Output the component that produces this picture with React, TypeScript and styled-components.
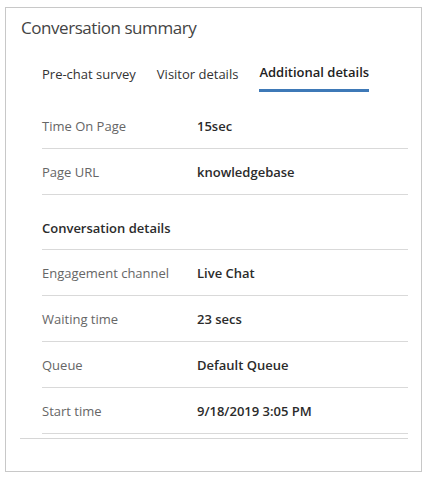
import React from "react";
import styled, { createGlobalStyle } from "styled-components";

const Global = createGlobalStyle`
  html, body { margin: 0; padding: 0; background: #ffffff; }
  body { font-family: "Open Sans", "Noto Sans", sans-serif; color: #333; }
`;

const Card = styled.div`
  box-sizing: border-box;
  width: 417px;
  height: 465px;
  margin: 7px 0 0 5px;
  border: 1px solid #c8c8c8;
  padding: 0 13px 0 14px;
  background: #fff;
`;

const Title = styled.h2`
  margin: 0;
  padding: 7px 0 0 1px;
  height: 26px;
  font-size: 17px;
  line-height: 26px;
  font-weight: 400;
  color: #444;
  letter-spacing: -0.45px;
`;

const Section = styled.div`
  border-bottom: 1px solid #d6d6d6;
  padding: 0 0 4px 22px;
`;

const Tabs = styled.div`
  display: flex;
  gap: 21px;
  margin-top: 21px;
  margin-bottom: 11px;
`;

const Tab = styled.div<{ $active?: boolean }>`
  font-size: 13px;
  line-height: 20px;
  color: ${(p) => (p.$active ? "#222" : "#333")};
  font-weight: ${(p) => (p.$active ? 600 : 400)};
  padding-top: ${(p) => (p.$active ? "0" : "2px")};
  padding-bottom: ${(p) => (p.$active ? "7px" : "5px")};
  border-bottom: 3px solid ${(p) => (p.$active ? "#3e79b7" : "transparent")};
`;

const Row = styled.div`
  display: grid;
  grid-template-columns: 155px 1fr;
  align-items: center;
  height: 45px;
  border-bottom: 1px solid #d9d9d9;
  font-size: 13px;
`;

const Label = styled.div`
  color: #666;
`;

const Value = styled.div`
  color: #2b2b2b;
  font-weight: 600;
`;

const Heading = styled.div`
  padding: 23px 0 11px;
  line-height: 20px;
  font-size: 13px;
  font-weight: 600;
  color: #2b2b2b;
  border-bottom: 1px solid #d9d9d9;
`;

const topRows = [
  ["Time On Page", "15sec"],
  ["Page URL", "knowledgebase"],
];

const detailRows = [
  ["Engagement channel", "Live Chat"],
  ["Waiting time", "23 secs"],
  ["Queue", "Default Queue"],
  ["Start time", "9/18/2019 3:05 PM"],
];

export default function App() {
  return (
    <>
      <Global />
      <Card>
        <Title>Conversation summary</Title>
        <Section>
          <Tabs>
            <Tab>Pre-chat survey</Tab>
            <Tab>Visitor details</Tab>
            <Tab $active>Additional details</Tab>
          </Tabs>
          {topRows.map(([l, v]) => (
            <Row key={l}>
              <Label>{l}</Label>
              <Value>{v}</Value>
            </Row>
          ))}
          <Heading>Conversation details</Heading>
          {detailRows.map(([l, v]) => (
            <Row key={l}>
              <Label>{l}</Label>
              <Value>{v}</Value>
            </Row>
          ))}
        </Section>
      </Card>
    </>
  );
}
